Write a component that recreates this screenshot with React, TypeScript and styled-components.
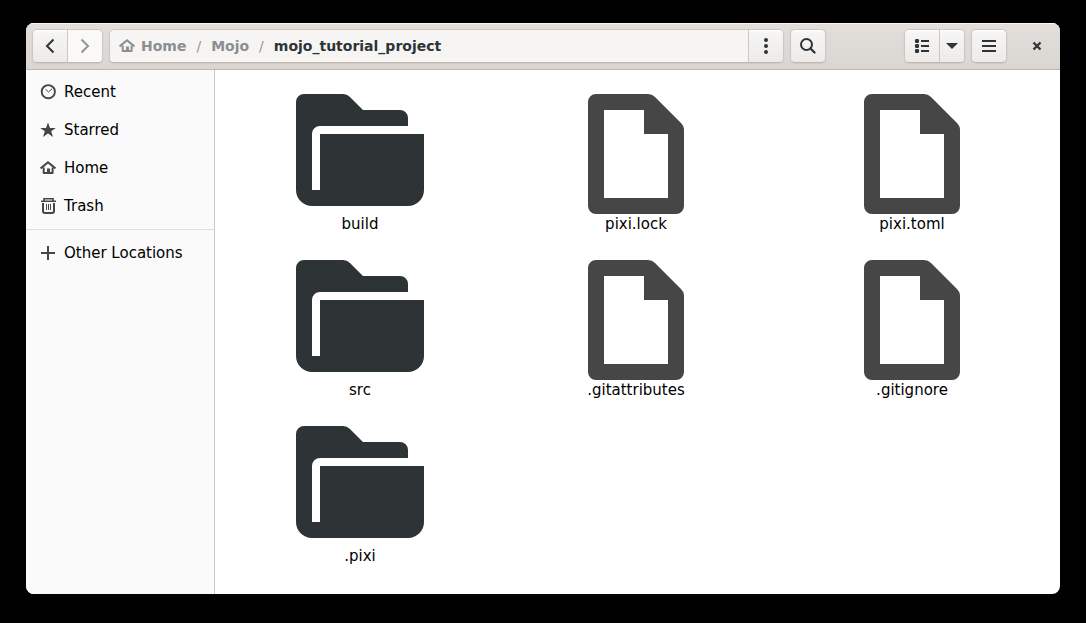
import React from "react";
import styled, { createGlobalStyle, css } from "styled-components";

const GlobalStyle = createGlobalStyle`
  *, *::before, *::after { box-sizing: border-box; }
  body {
    margin: 0;
    background: #000;
    color: #000;
    font: 15px/20px "DejaVu Sans", sans-serif;
  }
`;

const Desktop = styled.div`
  display: flex;
  min-height: 100vh;
  padding: 23px 26px 29px;
`;

const Window = styled.div`
  display: flex;
  flex: 1;
  flex-direction: column;
  min-width: 0;
  overflow: hidden;
  border-radius: 8px;
  background: #fff;
`;

const HeaderBar = styled.header`
  display: flex;
  align-items: center;
  gap: 6px;
  padding: 6px;
  border-bottom: 1px solid #bfb8b1;
  background: linear-gradient(to top, #dad6d2, #e1dedb);
  box-shadow: inset 0 1px #f9f8f8;
  color: #2e3436;
`;

const frame = css`
  height: 34px;
  border: 1px solid #cdc7c2;
  border-bottom-color: #bfb8b1;
  border-radius: 5px;
  box-shadow: 0 1px 2px rgba(0, 0, 0, 0.07);
`;

const Group = styled.div`
  ${frame}
  display: flex;
  overflow: hidden;
`;

const PathGroup = styled(Group)`
  flex: 1;
  min-width: 0;
`;

const buttonFace = css`
  display: flex;
  align-items: center;
  justify-content: center;
  padding: 0;
  background: linear-gradient(to top, #edebe9, #f6f5f4 90%, #fff);
  color: #2e3436;
`;

const GroupButton = styled.button<{ $width?: number; $divided?: boolean }>`
  ${buttonFace}
  flex: none;
  width: ${({ $width = 34 }) => $width}px;
  border: 0;
  border-left: ${({ $divided }) => ($divided ? "1px solid #cdc7c2" : "0")};

  &:disabled {
    background: #faf9f8;
    color: #929595;
  }
`;

const ToolButton = styled.button`
  ${frame}
  ${buttonFace}
  flex: none;
  width: 36px;
`;

const SearchButton = styled(ToolButton)`
  margin-right: 72px;
`;

const CloseButton = styled.button`
  display: flex;
  align-items: center;
  justify-content: center;
  width: 34px;
  height: 34px;
  margin-left: 7px;
  padding: 0;
  border: 0;
  background: none;
  color: #2e3436;
`;

const PathBar = styled.nav`
  display: flex;
  flex: 1;
  align-items: center;
  gap: 10px;
  min-width: 0;
  padding: 0 9px;
  background: #f6f5f4;
  color: #929595;
  font-size: 14px;
  white-space: nowrap;
`;

const Crumb = styled.a<{ $current?: boolean }>`
  display: flex;
  align-items: center;
  gap: 6px;
  color: ${({ $current }) => ($current ? "#2e3436" : "#8b8e8f")};
  font-weight: bold;
  text-decoration: none;
`;

const Body = styled.div`
  display: flex;
  flex: 1;
`;

const Sidebar = styled.nav`
  flex: none;
  width: 189px;
  padding-top: 3px;
  border-right: 1px solid #cdc7c2;
  background: #fafafa;
`;

const Place = styled.a`
  display: flex;
  align-items: center;
  gap: 8px;
  height: 38px;
  padding: 0 14px;
  color: #000;
  text-decoration: none;
  white-space: nowrap;

  svg { color: #464646; }
`;

const Separator = styled.hr`
  height: 1px;
  margin: 4px 0;
  border: 0;
  background: #dfdfdf;
`;

const Files = styled.main`
  display: grid;
  flex: 1;
  grid-template-columns: repeat(3, 1fr);
  grid-auto-rows: 148px;
  align-content: start;
  row-gap: 18px;
  padding: 16px 10px 16px 7px;
`;

const FileItem = styled.a`
  display: flex;
  flex-direction: column;
  align-items: center;
  color: #000;
  text-decoration: none;
`;

const Icon = styled.svg.attrs({ viewBox: "0 0 16 16", "aria-hidden": true })`
  flex: none;
  width: 16px;
  height: 16px;
  fill: none;
  stroke: currentColor;
  stroke-width: 2;
`;

const LargeIcon = styled.svg.attrs({ viewBox: "0 0 128 128", "aria-hidden": true })`
  flex: none;
  width: 128px;
  height: 128px;
`;

const HomeIcon = () => (
  <Icon>
    <path d="M.6 8.4 8 2.3l7.4 6.1" strokeWidth="2.1" />
    <path d="M3.7 7.5V13h8.9V7.5" strokeLinejoin="round" />
    <path d="M7 13V8.5h3V13z" fill="currentColor" stroke="none" />
  </Icon>
);

const FolderIcon = () => (
  <LargeIcon>
    <path
      fill="#2e3436"
      d="M8 8h39q4 0 7 3l13 13h37a8 8 0 0 1 8 8v8H24a8 8 0 0 0-8 8v56h8V48h104v56a16 16 0 0 1-16 16H16a16 16 0 0 1-16-16V16a8 8 0 0 1 8-8z"
    />
  </LargeIcon>
);

const DocumentIcon = () => (
  <LargeIcon>
    <path
      fill="#464646"
      fillRule="evenodd"
      d="M24 8h52q4 0 7 3l26 26q3 3 3 6v77a8 8 0 0 1-8 8H24a8 8 0 0 1-8-8V16a8 8 0 0 1 8-8zM32 24v88h64V48H72V24z"
    />
  </LargeIcon>
);

const places = [
  {
    name: "Recent",
    icon: (
      <Icon>
        <circle cx="8.3" cy="7.7" r="6.6" strokeWidth="1.9" />
        <path d="m5.5 5.3 3 2.7 3.5-3.2" strokeWidth="1" />
      </Icon>
    ),
  },
  {
    name: "Starred",
    icon: (
      <Icon>
        <path
          d="m8 .5 2 5.4h5.7L11.200 9.300 13 15 8 11.600 3 15l1.800-5.700L.3 5.900H6z"
          fill="currentColor"
          stroke="none"
        />
      </Icon>
    ),
  },
  { name: "Home", icon: <HomeIcon /> },
  {
    name: "Trash",
    icon: (
      <Icon>
        <path d="M1 3.200h15M4 2.700V.8h9v1.900" strokeWidth="1.6" />
        <path d="M3 5v8q0 2 2 2h7q2 0 2-2V5" />
        <path d="M6.500 6v6M8.500 6v6M10.500 6v6" strokeWidth="1" />
      </Icon>
    ),
  },
];

const files = [
  { name: "build", folder: true },
  { name: "pixi.lock" },
  { name: "pixi.toml" },
  { name: "src", folder: true },
  { name: ".gitattributes" },
  { name: ".gitignore" },
  { name: ".pixi", folder: true },
];

export default function App() {
  return (
    <Desktop>
      <GlobalStyle />
      <Window>
        <HeaderBar>
          <Group>
            <GroupButton aria-label="Back">
              <Icon><path d="M11.5 1.500 5 8l6.500 6.500" /></Icon>
            </GroupButton>
            <GroupButton $width={35} $divided disabled aria-label="Forward">
              <Icon><path d="M4.500 1.500 11 8l-6.500 6.500" /></Icon>
            </GroupButton>
          </Group>
          <PathGroup>
            <PathBar aria-label="Path">
              <Crumb href="#home"><HomeIcon />Home</Crumb>
              <span>/</span>
              <Crumb href="#mojo">Mojo</Crumb>
              <span>/</span>
              <Crumb href="#project" $current>mojo_tutorial_project</Crumb>
            </PathBar>
            <GroupButton $width={35} $divided aria-label="Folder menu">
              <Icon>
                <g fill="currentColor" stroke="none">
                  <circle cx="8" cy="2" r="2" />
                  <circle cx="8" cy="8" r="2" />
                  <circle cx="8" cy="14" r="2" />
                </g>
              </Icon>
            </GroupButton>
          </PathGroup>
          <SearchButton aria-label="Search">
            <Icon>
              <circle cx="6.500" cy="6.500" r="5.500" />
              <path d="m10.500 10.500 4 4" strokeWidth="2.300" strokeLinecap="round" />
            </Icon>
          </SearchButton>
          <Group>
            <GroupButton aria-label="List view">
              <Icon>
                <g fill="currentColor" stroke="none">
                  <rect x="1" y="1" width="4" height="4" rx="1.300" />
                  <rect x="1" y="6" width="4" height="4" rx="1.300" />
                  <rect x="1" y="11" width="4" height="4" rx="1.300" />
                </g>
                <path d="M7 3h8M7 8h8M7 13h8" />
              </Icon>
            </GroupButton>
            <GroupButton $width={25} $divided aria-label="View options">
              <Icon><path d="M2 5h12l-6 6z" fill="currentColor" stroke="none" /></Icon>
            </GroupButton>
          </Group>
          <ToolButton aria-label="Main menu">
            <Icon><path d="M1 3h14M1 8h14M1 13h14" /></Icon>
          </ToolButton>
          <CloseButton aria-label="Close">
            <Icon><path d="m4.500 4.500 7 7m0-7-7 7" strokeWidth="2.300" /></Icon>
          </CloseButton>
        </HeaderBar>
        <Body>
          <Sidebar aria-label="Places">
            {places.map(({ name, icon }) => (
              <Place key={name} href={`#${name}`}>{icon}{name}</Place>
            ))}
            <Separator />
            <Place href="#other">
              <Icon><path d="M8 1v14M1 8h14" /></Icon>
              Other Locations
            </Place>
          </Sidebar>
          <Files>
            {files.map(({ name, folder }) => (
              <FileItem key={name} href={`#${name}`}>
                {folder ? <FolderIcon /> : <DocumentIcon />}
                {name}
              </FileItem>
            ))}
          </Files>
        </Body>
      </Window>
    </Desktop>
  );
}
